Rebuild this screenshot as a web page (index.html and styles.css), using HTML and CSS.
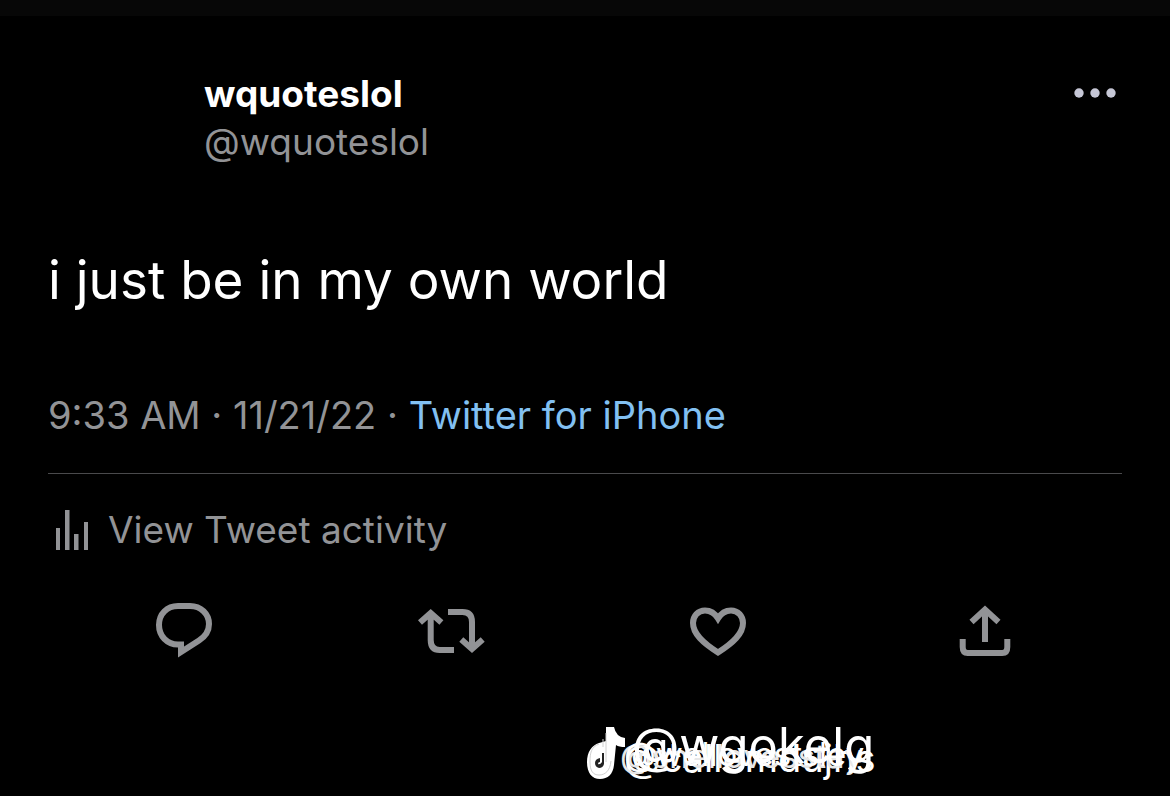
FILE: index.html
```html
<!DOCTYPE html>
<html lang="en">
<head>
    <meta charset="UTF-8">
    <meta name="viewport" content="width=device-width, initial-scale=1">
    <title>wquoteslol on Twitter</title>
    <link rel="stylesheet" href="styles.css">
</head>
<body>
    <div class="topbar"></div>
    <article class="tweet">
        <header class="header">
            <div class="avatar"></div>
            <div class="names">
                <div class="name">wquoteslol</div>
                <div class="handle">@wquoteslol</div>
            </div>
            <button class="icon-btn more" aria-label="More">
                <svg width="42" height="10" viewBox="0 0 42 10" fill="#c6c7d6">
                    <circle cx="5" cy="5" r="4.7"/>
                    <circle cx="21" cy="5" r="4.7"/>
                    <circle cx="37" cy="5" r="4.7"/>
                </svg>
            </button>
        </header>

        <p class="text">i just be in my own world</p>

        <p class="meta">9:33 AM · 11/21/22 · <a href="#" class="source">Twitter for iPhone</a></p>

        <a href="#" class="activity">
            <svg width="48" height="42" viewBox="0 0 48 42" fill="#929396">
                <rect x="8" y="19" width="4" height="22"/>
                <rect x="17" y="1" width="4.5" height="40"/>
                <rect x="26" y="25" width="4.5" height="16"/>
                <rect x="36" y="13" width="4" height="28"/>
            </svg>
            <span>View Tweet activity</span>
        </a>

        <div class="actions">
            <button class="icon-btn" aria-label="Reply">
                <svg width="70" height="60" viewBox="0 0 70 60">
                    <path d="M32 52v-7.5h-3C18 44.500 10 36 10 25S18 6 29 6h12c11 0 19 8 19 18 0 7-3 12-10 16.500z"/>
                </svg>
            </button>
            <button class="icon-btn" aria-label="Retweet">
                <svg width="70" height="60" viewBox="0 0 70 60">
                    <path d="M4 22.500l10.700-9.500 10.700 9.500M14.700 14v26q0 10 9 10H38M32 12h14.500q9.500 0 9.500 10v27M45.300 39.500L56 49l10.700-9.500"/>
                </svg>
            </button>
            <button class="icon-btn" aria-label="Like">
                <svg width="70" height="60" viewBox="0 0 70 60">
                    <path d="M35 52.500C20 43 10 34 10 23c0-7 5-12.500 12-12.500 6 0 10 3 13 8 3-5 7-8 13-8 7 0 12 5.500 12 12.500 0 11-10 20-25 29.500z"/>
                </svg>
            </button>
            <button class="icon-btn" aria-label="Share">
                <svg width="70" height="60" viewBox="0 0 70 60">
                    <path d="M21.500 22L35 9.500 48.500 22M35 10v32M12.700 39v8q0 6 5 6h34.600q5 0 5-6v-8"/>
                </svg>
            </button>
        </div>
    </article>

    <!-- stacked repost watermarks -->
    <footer class="watermark">
        <svg class="note" width="40" height="54" viewBox="0 0 40 54">
            <path fill="#fff" d="M20 1h8q2 10 11 11v9q-6 0-9-2l-2 20c-1 9-6 14-14 14S1 47 1 36c0-10 5-17 12-19l7-2z"/>
            <path fill="none" stroke="#d0d0d0" stroke-width="1" d="M13 18C5 21 4 27 4 36c0 9 3 13 9 13s11-4 12-14M20 7v29M17 13v8"/>
            <path fill="#222" d="M16 27h2v11q-1 4-5 4-4-1-4-5 0-4 5-5v4q-2 0-2 2 2 1 4-2z"/>
        </svg>
        <span class="mark mark-back">@callemdujhs</span>
        <span class="mark mark-mid">@shellovesstay</span>
        <span class="mark mark-mid2">@wellovestsley</span>
        <span class="mark mark-front">@wgokelg</span>
    </footer>
</body>
</html>
```

FILE: styles.css
```css
* {
    box-sizing: border-box;
}
body {
    margin: 0;
    background: #000;
    color: #fff;
    font-family: Inter, "Liberation Sans", sans-serif;
}
.topbar {
    height: 16px;
    background: #070707;
}
.tweet {
    padding: 54px 48px 0;
}
.header {
    display: flex;
    align-items: flex-start;
}
.avatar {
    width: 132px;
    height: 108px;
    margin-right: 24px;
}
.names {
    flex: 1;
    font-size: 37px;
    line-height: 48px;
}
.name {
    font-weight: 700;
}
.handle {
    color: #929396;
}
.icon-btn {
    display: block;
    padding: 0;
    border: none;
    background: none;
    cursor: pointer;
}
.icon-btn svg,
.activity svg {
    display: block;
}
.more {
    margin: 18px 6px 0 0;
}
.text {
    margin: 66px 0 0;
    font-size: 53px;
    font-weight: 400;
    line-height: 72px;
}
.meta {
    margin: 75px 0 0;
    padding-bottom: 34px;
    border-bottom: 1px solid #4a4a4c;
    color: #929396;
    font-size: 38px;
    line-height: 48px;
}
.source {
    color: #82c0f2;
    text-decoration: none;
}
.activity {
    display: flex;
    align-items: center;
    gap: 12px;
    margin-top: 32px;
    color: #929396;
    font-size: 37px;
    line-height: 48px;
    text-decoration: none;
}
.actions {
    display: grid;
    grid-template-columns: repeat(4, 1fr);
    justify-items: center;
    margin-top: 46px;
    padding: 0 4px 0 2px;
}
.actions path {
    fill: none;
    stroke: #929396;
    stroke-width: 6;
}
.watermark {
    position: relative;
    width: 290px;
    height: 60px;
    margin: 64px auto 0;
    left: 146px;
}
.note {
    position: absolute;
    left: 0;
    top: 2px;
}
.mark {
    position: absolute;
    line-height: 48px;
    white-space: nowrap;
}
.mark-back {
    left: 38px;
    top: 10px;
    font-size: 38px;
}
.mark-mid {
    left: 34px;
    top: 8px;
    color: #e8e8e8;
    font-size: 33px;
}
.mark-mid2 {
    left: 38px;
    top: 6px;
    font-size: 33px;
}
.mark-front {
    left: 46px;
    top: -2px;
    font-size: 49px;
}
```
